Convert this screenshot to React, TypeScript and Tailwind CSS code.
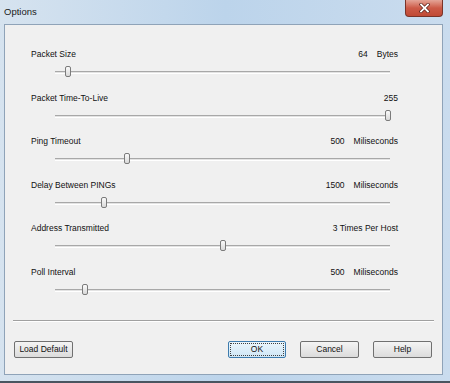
import React from "react";

type Setting = {
  label: string;
  value: string;
  unit?: string;
  thumb: number; // thumb centre, px from track start
};

const settings: Setting[] = [
  { label: "Packet Size", value: "64", unit: "Bytes", thumb: 13 },
  { label: "Packet Time-To-Live", value: "255", thumb: 333 },
  { label: "Ping Timeout", value: "500", unit: "Miliseconds", thumb: 72 },
  { label: "Delay Between PINGs", value: "1500", unit: "Miliseconds", thumb: 49 },
  { label: "Address Transmitted", value: "3 Times Per Host", thumb: 168 },
  { label: "Poll Interval", value: "500", unit: "Miliseconds", thumb: 30 },
];

function Slider({ thumb }: { thumb: number }) {
  return (
    <div className="relative h-[14px] ml-[24px] mr-[8px]">
      <div className="absolute left-0 right-0 top-[6px] h-[3px] border-t border-t-[#a8a8a8] border-b border-b-[#ffffff] bg-[#e3e3e3]" />
      <div
        className="absolute top-[1px] w-[6px] h-[11px] rounded-[2px] border border-[#7b7b7b] bg-gradient-to-b from-[#fafafa] to-[#d9d9d9]"
        style={{ left: thumb - 3 }}
      />
    </div>
  );
}

function Row({ s }: { s: Setting }) {
  return (
    <div className="h-[43.6px]">
      <div className="flex justify-between h-[12px] leading-[12px] text-[8.5px] text-[#111111]">
        <span>{s.label}</span>
        <span className="flex">
          <span>{s.value}</span>
          {s.unit && <span className="ml-[9px]">{s.unit}</span>}
        </span>
      </div>
      <div className="mt-[5px]">
        <Slider thumb={s.thumb} />
      </div>
    </div>
  );
}

function Button({ label, focused }: { label: string; focused?: boolean }) {
  return (
    <button
      className={
        focused
          ? "h-[17px] w-[58px] rounded-[2px] border border-[#3d7bad] bg-gradient-to-b from-[#eaf6fd] to-[#cfe6f5] p-[1px] text-[8.5px] text-[#111111] leading-none"
          : "h-[17px] w-[59px] rounded-[2px] border border-[#707070] bg-gradient-to-b from-[#f4f4f4] to-[#dcdcdc] text-[8.5px] text-[#111111] leading-none"
      }
    >
      {focused ? (
        <span className="flex h-full w-full items-center justify-center border border-dotted border-[#404040]">
          {label}
        </span>
      ) : (
        label
      )}
    </button>
  );
}

export default function App() {
  return (
    <div
      className="relative w-[450px] h-[383px] overflow-hidden bg-gradient-to-r from-[#d6e3ef] via-[#bcd4eb] to-[#cadcee]"
      style={{ fontFamily: '"Liberation Sans", Arial, sans-serif' }}
    >
      {/* Title bar */}
      <div className="h-[24px] pl-[4px] pt-[6px] text-[9.5px] leading-[12px] text-[#1a1a1a]">Options</div>
      <div className="absolute right-[7px] top-0 w-[38px] h-[17px] rounded-b-[4px] border border-t-0 border-[#7a3328] bg-gradient-to-b from-[#e4a497] via-[#cc5a47] to-[#c04a35] flex items-center justify-center">
        <svg width="11" height="10" viewBox="0 0 11 10">
          <path d="M2 1.5 L9 8.5 M9 1.5 L2 8.5" stroke="#5a1f18" strokeWidth="3.2" strokeLinecap="square" />
          <path d="M2 1.5 L9 8.5 M9 1.5 L2 8.5" stroke="#ffffff" strokeWidth="1.8" strokeLinecap="square" />
        </svg>
      </div>

      {/* Client area */}
      <div className="ml-[4px] mr-[7px] h-[351px] border border-[#8fa3b8] bg-[#f0f0f0]">
        <div className="pl-[26px] pr-[44px] pt-[23px]">
          {settings.map((s) => (
            <Row key={s.label} s={s} />
          ))}
        </div>

        <div className="mx-[8px] mt-[10px] h-[2px] border-t border-t-[#a0a0a0] border-b border-b-[#ffffff]" />

        <div className="mt-[19px] flex justify-between pl-[9px] pr-[10px]">
          <Button label="Load Default" />
          <div className="flex gap-[14px]">
            <Button label="OK" focused />
            <Button label="Cancel" />
            <Button label="Help" />
          </div>
        </div>
      </div>

      {/* Bottom frame edge */}
      <div className="absolute left-0 right-0 bottom-0 h-[2px] bg-[#4a5560]" />
    </div>
  );
}
